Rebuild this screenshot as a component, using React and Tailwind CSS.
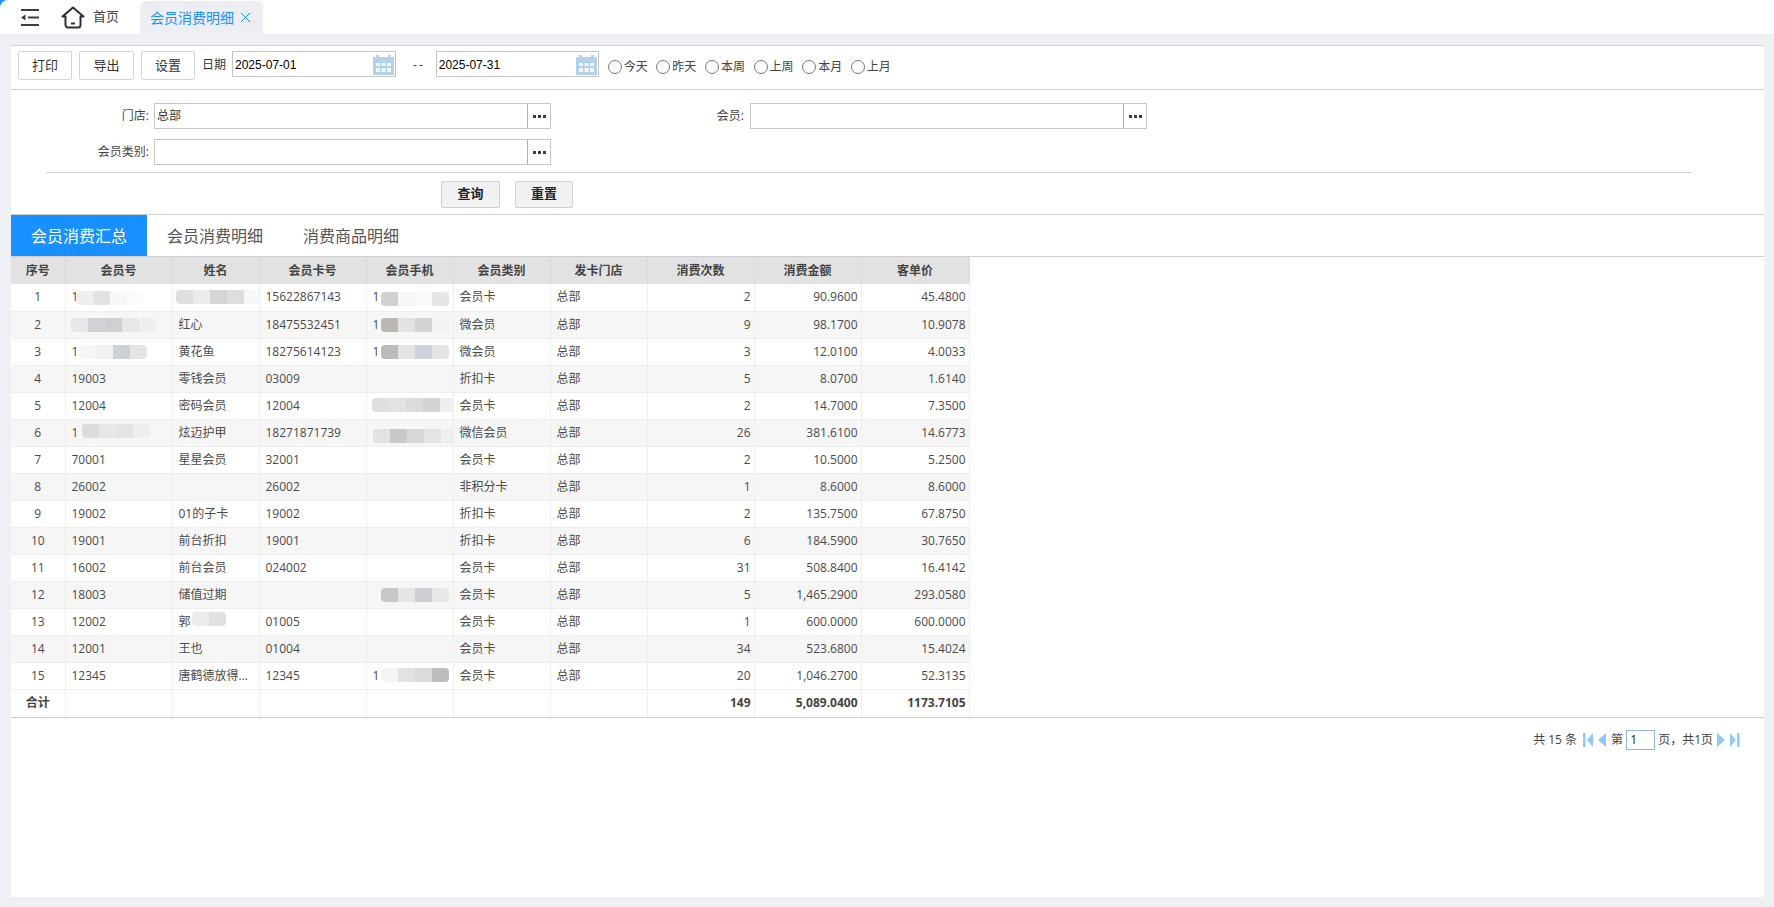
import React from "react";

const FONT = "font-['Open_Sans','Noto_Sans_CJK_SC',sans-serif]";

const rows = [
  [1, "1", "", "15622867143", "1", "会员卡", "总部", 2, "90.9600", "45.4800"],
  [2, "", "红心", "18475532451", "1", "微会员", "总部", 9, "98.1700", "10.9078"],
  [3, "1", "黄花鱼", "18275614123", "1", "微会员", "总部", 3, "12.0100", "4.0033"],
  [4, "19003", "零钱会员", "03009", "", "折扣卡", "总部", 5, "8.0700", "1.6140"],
  [5, "12004", "密码会员", "12004", "", "会员卡", "总部", 2, "14.7000", "7.3500"],
  [6, "1", "炫迈护甲", "18271871739", "", "微信会员", "总部", 26, "381.6100", "14.6773"],
  [7, "70001", "星星会员", "32001", "", "会员卡", "总部", 2, "10.5000", "5.2500"],
  [8, "26002", "", "26002", "", "非积分卡", "总部", 1, "8.6000", "8.6000"],
  [9, "19002", "01的子卡", "19002", "", "折扣卡", "总部", 2, "135.7500", "67.8750"],
  [10, "19001", "前台折扣", "19001", "", "折扣卡", "总部", 6, "184.5900", "30.7650"],
  [11, "16002", "前台会员", "024002", "", "会员卡", "总部", 31, "508.8400", "16.4142"],
  [12, "18003", "储值过期", "", "", "会员卡", "总部", 5, "1,465.2900", "293.0580"],
  [13, "12002", "郭", "01005", "", "会员卡", "总部", 1, "600.0000", "600.0000"],
  [14, "12001", "王也", "01004", "", "会员卡", "总部", 34, "523.6800", "15.4024"],
  [15, "12345", "唐鹤德放得...", "12345", "1", "会员卡", "总部", 20, "1,046.2700", "52.3135"],
];

// blurred-out cells, keyed by row and column
const mosaics = {
  "1-1": { pos: "left-[10px] top-[7px]", blocks: ["bg-[#eeeff0]", "bg-[#e2e3e4]", "bg-[#f8f8f8]", "bg-[#fbfbfb]"] },
  "1-2": { pos: "left-[3px] top-[6px]", blocks: ["bg-[#dfdfdf]", "bg-[#ececec]", "bg-[#d6d5d5]", "bg-[#dfdedd]", "bg-[#f4f8fb]"] },
  "1-4": { pos: "left-[14px] top-[8px]", blocks: ["bg-[#d0d1d3]", "bg-[#f6f6f6]", "bg-[#fafafa]", "bg-[#e6e6e6]"] },
  "2-1": { pos: "left-[5px] top-[6px]", blocks: ["bg-[#e6e7e8]", "bg-[#cfd2d6]", "bg-[#d0d0d1]", "bg-[#e6e7e9]", "bg-[#eeeff0]"] },
  "2-4": { pos: "left-[14px] top-[6px]", blocks: ["bg-[#bdb7b4]", "bg-[#e5e3e1]", "bg-[#d5d3d2]", "bg-[#f3f3f3]"] },
  "3-1": { pos: "left-[13px] top-[6px]", blocks: ["bg-[#f6f7f7]", "bg-[#f0f1f1]", "bg-[#cdd0d5]", "bg-[#e6e5e4]"] },
  "3-4": { pos: "left-[14px] top-[6px]", blocks: ["bg-[#bcbbbc]", "bg-[#e5e3e2]", "bg-[#cfd1da]", "bg-[#e4e4e4]"] },
  "5-4": { pos: "left-[5px] top-[5px]", blocks: ["bg-[#e0dfdf]", "bg-[#e4e3e3]", "bg-[#dddcdc]", "bg-[#d3d2d1]", "bg-[#eeeeee]"] },
  "6-1": { pos: "left-[16px] top-[4px]", blocks: ["bg-[#dcdcdc]", "bg-[#e6e7e6]", "bg-[#e4e4e4]", "bg-[#eeeeee]"] },
  "6-4": { pos: "left-[6px] top-[9px]", blocks: ["bg-[#e2e2e2]", "bg-[#c8c8c9]", "bg-[#d8d8d8]", "bg-[#e4e4e4]", "bg-[#efefef]"] },
  "12-4": { pos: "left-[14px] top-[6px]", blocks: ["bg-[#c9c6c6]", "bg-[#e6e5e4]", "bg-[#cdced1]", "bg-[#e8e8e8]"] },
  "13-2": { pos: "left-[19px] top-[3px]", blocks: ["bg-[#ececec]", "bg-[#e0e0e0]"] },
  "15-4": { pos: "left-[14px] top-[5px]", blocks: ["bg-[#f4f4f5]", "bg-[#e2e2e2]", "bg-[#dcdbda]", "bg-[#bdbdbd]"] },
};

const headers = ["序号", "会员号", "姓名", "会员卡号", "会员手机", "会员类别", "发卡门店", "消费次数", "消费金额", "客单价"];
const colWidths = ["w-[54px]", "w-[107px]", "w-[87px]", "w-[107px]", "w-[87px]", "w-[97px]", "w-[97px]", "w-[107px]", "w-[107px]", "w-[108px]"];

function Mosaic({ pos, blocks }) {
  return (
    <span className={`absolute ${pos} flex h-[14px] overflow-hidden rounded-[4px] blur-[0.6px]`}>
      {blocks.map((c, i) => (
        <span key={i} className={`h-full w-[17px] ${c}`} />
      ))}
    </span>
  );
}

function Calendar() {
  return (
    <svg width="21" height="21" viewBox="0 0 21 21" className="shrink-0">
      <path d="M0 3h3V1h3v2h9V1h3v2h3v18H0z" fill="#b3d1ea" />
      <g fill="#f2f7fb">
        <rect x="3" y="9" width="4" height="3" />
        <rect x="8.5" y="9" width="4" height="3" />
        <rect x="14" y="9" width="4" height="3" />
        <rect x="3" y="14" width="4" height="4" />
        <rect x="8.5" y="14" width="4" height="4" />
        <rect x="14" y="14" width="4" height="4" />
      </g>
    </svg>
  );
}

function DateInput({ value, width }) {
  return (
    <div className={`flex h-[26px] ${width} items-center justify-between border border-[#c4c4c4] pl-[2px] pr-[1px] font-['Liberation_Sans','Noto_Sans_CJK_SC',sans-serif] text-[12px] text-black`}>
      <span className="pt-[1px]">{value}</span>
      <Calendar />
    </div>
  );
}

function PickInput({ value, width }) {
  return (
    <div className={`flex h-[26px] ${width} items-center border border-[#c4c4c4] text-[12px] text-[#333]`}>
      <span className="flex-1 pl-[2px]">{value}</span>
      <span className="flex h-[24px] w-[23px] items-center justify-center gap-[2px] border-l border-[#b0b0b0]">
        <i className="h-[3px] w-[3px] bg-[#3a3a44]" />
        <i className="h-[3px] w-[3px] bg-[#3a3a44]" />
        <i className="h-[3px] w-[3px] bg-[#3a3a44]" />
      </span>
    </div>
  );
}

function ToolButton({ children, width }) {
  return (
    <button className={`h-[29px] ${width} rounded-[2px] border border-[#d4d4d4] bg-white text-[13px] text-[#333]`}>
      {children}
    </button>
  );
}

function PageIcon({ kind }) {
  const paths = {
    first: "M0 0h2.500v14H0zM10 0v14L4 7z",
    prev: "M8 0v14L0 7z",
    next: "M0 0v14l8-7z",
    last: "M0 0l6 7-6 7zM7 0h2.500v14H7z",
  };
  const w = kind === "first" || kind === "last" ? 10 : 8;
  return (
    <svg width={w} height="14" viewBox={`0 0 ${w} 14`} className="shrink-0">
      <path d={paths[kind]} fill="#90c9f6" />
    </svg>
  );
}

export default function App() {
  return (
    <div className={`flex h-[907px] flex-col bg-[#eef0f4] ${FONT}`}>
      {/* top bar */}
      <div className="bg-[#1890ff]">
        <div className="flex h-[34px] items-end rounded-tl-[8px] bg-white pl-[21px]">
          <div className="flex h-[34px] items-center">
            <svg width="18" height="17" viewBox="0 0 18 17" className="shrink-0">
              <path d="M0 1h18M7 8.500h11M0 16h18" stroke="#3c3f46" strokeWidth="2" fill="none" />
              <path d="M4.500 5.500v6L0 8.500z" fill="#3c3f46" />
            </svg>
            <svg width="24" height="23" viewBox="0 0 24 23" className="ml-[22px] shrink-0">
              <path d="M12 1.500 1.500 10.500 4.500 10.500V19a2.500 2.500 0 0 0 2.500 2.500h10a2.500 2.500 0 0 0 2.500-2.500V10.500h3z" fill="none" stroke="#2b3039" strokeWidth="2" strokeLinejoin="round" />
              <path d="M10 17.500h4" stroke="#2b3039" strokeWidth="2" />
            </svg>
            <span className="ml-[8px] text-[13px] text-[#444]">首页</span>
          </div>
          <div className="ml-[21px] flex h-[33px] w-[123px] items-center rounded-t-[6px] bg-[#eceef2] pl-[10px] text-[14px] text-[#1890ff]">
            会员消费明细
            <svg width="11" height="11" viewBox="0 0 11 11" className="ml-[6px]">
              <path d="M1 1l9 9M10 1l-9 9" stroke="#1890ff" strokeWidth="1" />
            </svg>
          </div>
        </div>
      </div>

      {/* main panel */}
      <div className="ml-[11px] mr-[10px] mt-[11px] flex-1 border-t border-[#cfcfcf] bg-white mb-[10px]">
        {/* toolbar */}
        <div className="flex h-[44px] border-b border-[#cfcfcf] pl-[7px] pt-[5px]">
          <ToolButton width="w-[54px]">打印</ToolButton>
          <div className="w-[7px]" />
          <ToolButton width="w-[55px]">导出</ToolButton>
          <div className="w-[7px]" />
          <ToolButton width="w-[54px]">设置</ToolButton>
          <span className="ml-[7px] mr-[6px] mt-[5px] text-[12px] text-[#333]">日期</span>
          <DateInput value="2025-07-01" width="w-[164px]" />
          <span className="ml-[17px] mr-[11px] mt-[5px] text-[12px] tracking-[2px] text-[#333]">--</span>
          <DateInput value="2025-07-31" width="w-[163px]" />
          <div className="ml-[9px] mt-[9px] flex h-[14px] items-center text-[12px] text-[#444]">
            {["今天", "昨天", "本周", "上周", "本月", "上月"].map((t) => (
              <label key={t} className="flex w-[48.600px] items-center gap-[2px]">
                <span className="h-[14px] w-[14px] shrink-0 rounded-full border border-[#777] bg-white" />
                {t}
              </label>
            ))}
          </div>
        </div>

        {/* filter form */}
        <div className="h-[125px] border-b border-[#cfcfcf] pt-[13px]">
          <div className="flex items-center text-[12px] text-[#444]">
            <span className="w-[138px] text-right">门店:</span>
            <div className="ml-[5px]"><PickInput value="总部" width="w-[397px]" /></div>
            <span className="w-[193px] text-right">会员:</span>
            <div className="ml-[6px]"><PickInput value="" width="w-[397px]" /></div>
          </div>
          <div className="mt-[10px] flex items-center text-[12px] text-[#444]">
            <span className="w-[138px] text-right">会员类别:</span>
            <div className="ml-[5px]"><PickInput value="" width="w-[397px]" /></div>
          </div>
          <div className="ml-[35px] mt-[7px] w-[1646px] border-t border-[#cfcfcf]" />
          <div className="ml-[430px] mt-[8px] flex gap-[15px]">
            <button className="h-[27px] w-[59px] rounded-[2px] border border-[#d0d0d0] bg-[#f1f1f1] pb-[2px] text-[13px] font-bold text-[#222]">查询</button>
            <button className="h-[27px] w-[58px] rounded-[2px] border border-[#d0d0d0] bg-[#f1f1f1] pb-[2px] text-[13px] font-bold text-[#222]">重置</button>
          </div>
        </div>

        {/* tabs */}
        <div className="flex h-[42px] border-b border-[#cfcfcf] text-[16px] text-[#555]">
          <div className="flex h-[41px] w-[136px] items-center justify-center bg-[#1890ff] pt-[1px] text-white">会员消费汇总</div>
          <div className="flex h-[41px] w-[136px] items-center justify-center pt-[1px]">会员消费明细</div>
          <div className="flex h-[41px] w-[136px] items-center justify-center pt-[1px]">消费商品明细</div>
        </div>

        {/* table */}
        <div className="border-b border-[#cfcfcf]">
          <table className="w-[958px] table-fixed border-collapse text-[12px] text-[#4a4a4a]">
            <colgroup>
              {colWidths.map((w, i) => (
                <col key={i} className={w} />
              ))}
            </colgroup>
            <thead>
              <tr className="h-[27px] bg-[#e2e2e2]">
                {headers.map((h) => (
                  <th key={h} className="border-r border-[#dadada] p-0 text-center font-bold text-[#444]">{h}</th>
                ))}
              </tr>
            </thead>
            <tbody>
              {rows.map((r, ri) => (
                <tr key={r[0]} className={`h-[27px] ${ri % 2 ? "bg-[#f6f6f6]" : "bg-white"}`}>
                  {r.map((v, ci) => {
                    const m = mosaics[`${r[0]}-${ci}`];
                    const align = ci === 0 ? "text-center" : ci >= 7 ? "pr-[3px] text-right" : "pl-[6px] text-left";
                    return (
                      <td key={ci} className={`relative overflow-hidden whitespace-nowrap border-b border-r border-[#eeeeee] p-0 ${align}`}>
                        {v}
                        {m && <Mosaic pos={m.pos} blocks={m.blocks} />}
                      </td>
                    );
                  })}
                </tr>
              ))}
              <tr className="h-[28px] font-bold text-[#444]">
                <td className="border-r border-[#eeeeee] p-0 text-center">合计</td>
                <td className="border-r border-[#eeeeee]" />
                <td className="border-r border-[#eeeeee]" />
                <td className="border-r border-[#eeeeee]" />
                <td className="border-r border-[#eeeeee]" />
                <td className="border-r border-[#eeeeee]" />
                <td className="border-r border-[#eeeeee]" />
                <td className="border-r border-[#eeeeee] p-0 pr-[3px] text-right">149</td>
                <td className="border-r border-[#eeeeee] p-0 pr-[3px] text-right">5,089.0400</td>
                <td className="border-r border-[#eeeeee] p-0 pr-[3px] text-right">1173.7105</td>
              </tr>
            </tbody>
          </table>
        </div>

        {/* pagination */}
        <div className="flex h-[44px] items-center justify-end pr-[24px] text-[12px] text-[#444]">
          <span>共 15 条</span>
          <span className="ml-[6px]"><PageIcon kind="first" /></span>
          <span className="ml-[5px]"><PageIcon kind="prev" /></span>
          <span className="ml-[5px]">第</span>
          <span className="ml-[3px] flex h-[20px] w-[29px] items-center border border-[#8fb8e6] pl-[3px] text-[#222]">1</span>
          <span className="ml-[3px]">页，共1页</span>
          <span className="ml-[4px]"><PageIcon kind="next" /></span>
          <span className="ml-[5px]"><PageIcon kind="last" /></span>
        </div>
      </div>
    </div>
  );
}
